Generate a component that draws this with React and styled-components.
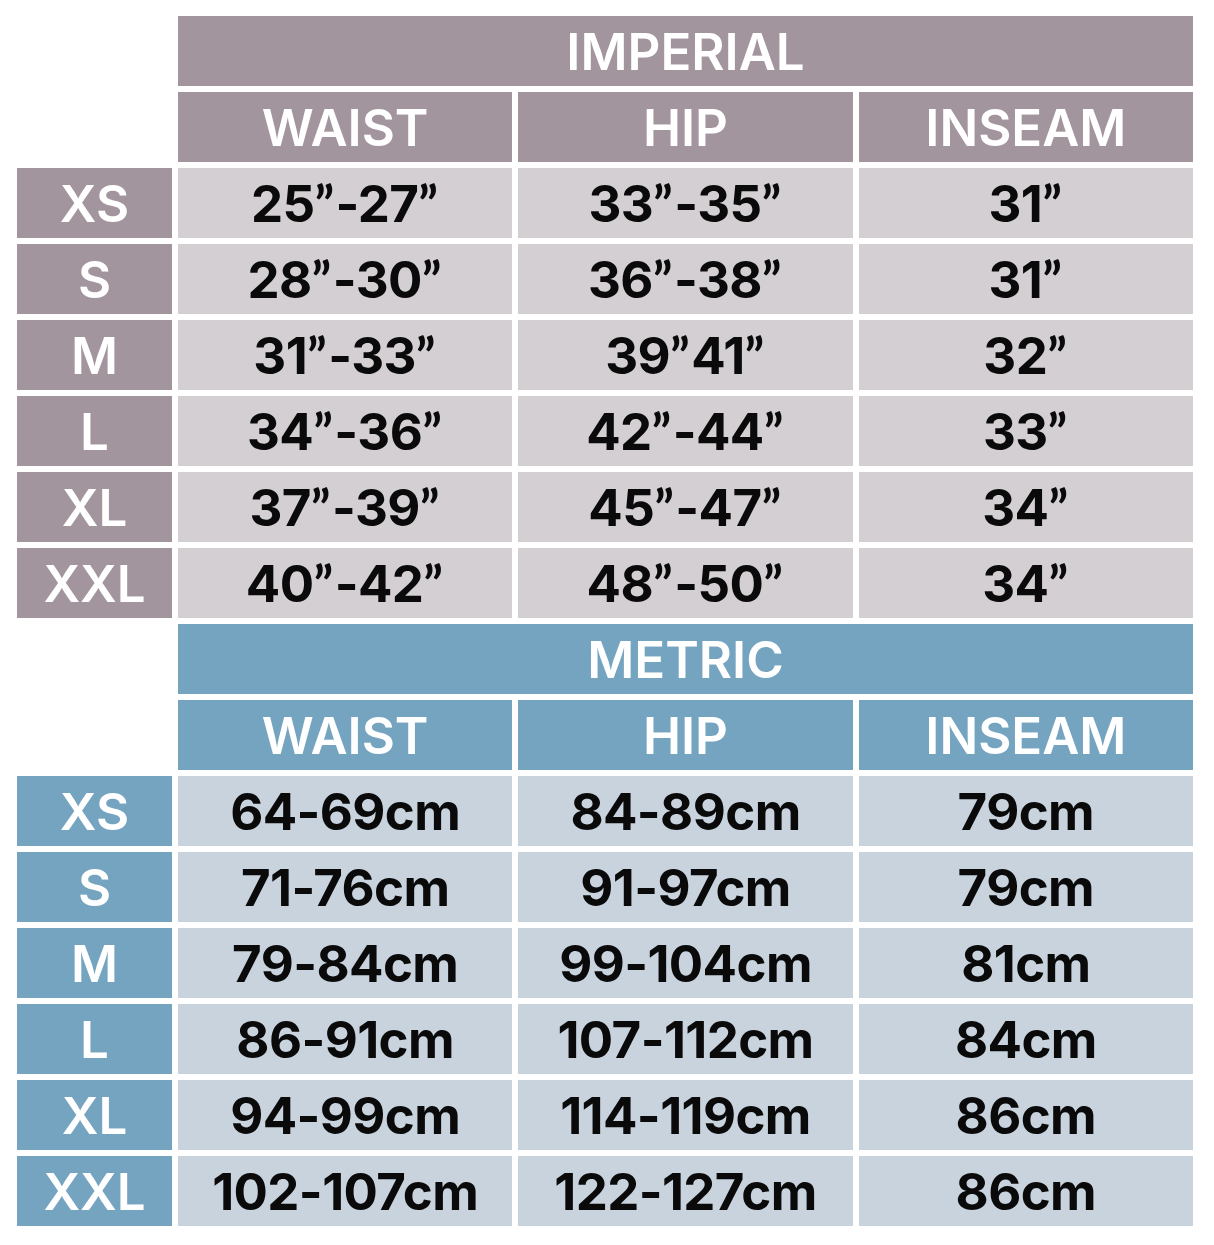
import React from 'react'
import styled, { createGlobalStyle } from 'styled-components'

const tones = {
    imperial: { dark: '#a3959e', light: '#d3cfd3' },
    metric: { dark: '#75a4c1', light: '#c8d3de' },
}

const charts = [
    {
        title: 'IMPERIAL',
        tone: 'imperial',
        rows: [
            ['XS', '25”-27”', '33”-35”', '31”'],
            ['S', '28”-30”', '36”-38”', '31”'],
            ['M', '31”-33”', '39”41”', '32”'],
            ['L', '34”-36”', '42”-44”', '33”'],
            ['XL', '37”-39”', '45”-47”', '34”'],
            ['XXL', '40”-42”', '48”-50”', '34”'],
        ],
    },
    {
        title: 'METRIC',
        tone: 'metric',
        rows: [
            ['XS', '64-69cm', '84-89cm', '79cm'],
            ['S', '71-76cm', '91-97cm', '79cm'],
            ['M', '79-84cm', '99-104cm', '81cm'],
            ['L', '86-91cm', '107-112cm', '84cm'],
            ['XL', '94-99cm', '114-119cm', '86cm'],
            ['XXL', '102-107cm', '122-127cm', '86cm'],
        ],
    },
]

const columns = ['WAIST', 'HIP', 'INSEAM']

// curly quotes come from a font whose ” is actually curly
function withQuotes(text) {
    return text.split(/(”)/).map((part, i) =>
        part === '”' ? <Quote key={i}>”</Quote> : part
    )
}

export default function App() {
    return (
        <>
            <GlobalStyle />
            <Page>
                {charts.map(chart => (
                    <Chart key={chart.title}>
                        <Title tone={chart.tone}>{chart.title}</Title>
                        <Corner />
                        {columns.map(c => <ColumnHead key={c} tone={chart.tone}>{c}</ColumnHead>)}
                        {chart.rows.map(([size, ...values]) => (
                            <React.Fragment key={size}>
                                <SizeLabel tone={chart.tone}>{size}</SizeLabel>
                                {values.map((v, i) => <Value key={i} tone={chart.tone}>{withQuotes(v)}</Value>)}
                            </React.Fragment>
                        ))}
                    </Chart>
                ))}
            </Page>
        </>
    )
}

const GlobalStyle = createGlobalStyle`
    body {
        margin: 0;
        background: #ffffff;
        font-family: Inter, "Noto Sans", sans-serif;
    }
`

const Page = styled.div`
    width: 1176px;
    padding: 16px 0 0 17px;
    display: flex;
    flex-direction: column;
    gap: 6px;
`

const Chart = styled.div`
    display: grid;
    grid-template-columns: 155px repeat(3, 1fr);
    grid-auto-rows: 70px;
    gap: 6px;
`

const Cell = styled.div`
    display: flex;
    align-items: center;
    justify-content: center;
    font-size: 51px;
    line-height: 1;
    padding-top: 1px;
    white-space: nowrap;
`

const Title = styled(Cell)`
    grid-column: 2 / 5;
    background: ${p => tones[p.tone].dark};
    color: #ffffff;
    font-weight: 600;
`

const Corner = styled.div``

const ColumnHead = styled(Cell)`
    background: ${p => tones[p.tone].dark};
    color: #ffffff;
    font-weight: 600;
`

const SizeLabel = styled(Cell)`
    background: ${p => tones[p.tone].dark};
    color: #ffffff;
    font-weight: 600;
`

const Value = styled(Cell)`
    background: ${p => tones[p.tone].light};
    color: #0a0a0a;
    font-weight: 700;
    letter-spacing: -0.6px;
`

const Quote = styled.span`
    font-family: Lato, "Liberation Sans", sans-serif;
    font-weight: 700;
    margin: 0 2px 0 0;
`
